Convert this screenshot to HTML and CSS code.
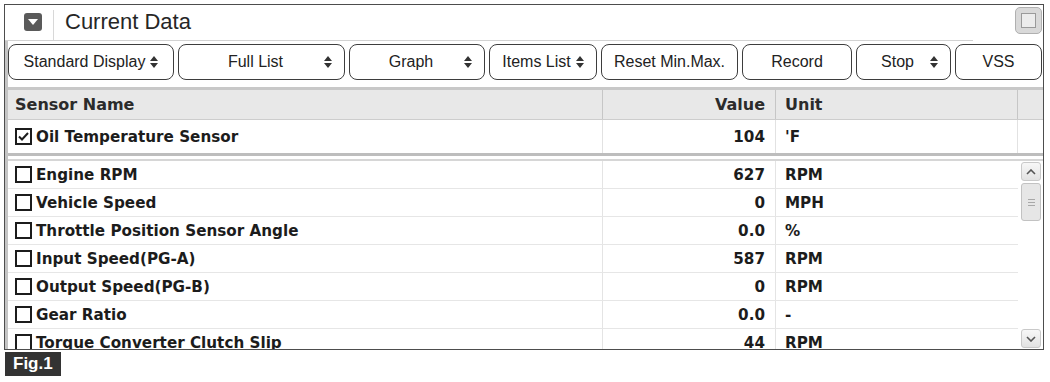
FILE: index.html
```html
<!DOCTYPE html>
<html lang="en">
<head>
    <meta charset="UTF-8">
    <title>Current Data</title>
    <link rel="stylesheet" href="styles.css">
</head>
<body>

    <div class="window">
        <div class="titlebar">
            <div class="title-main">
                <span class="collapse">
                    <svg width="10" height="6" viewBox="0 0 10 6"><path d="M0 0 H10 L5 6 Z" fill="#fff"/></svg>
                </span>
                <span class="title-sep"></span>
                <span class="title-text">Current Data</span>
            </div>
            <span class="max-btn"><span class="max-inner"></span></span>
        </div>

        <div class="content">
            <div class="toolbar">
                <div class="tb tight b1">Standard Display <svg class="updown" width="8" height="12" viewBox="0 0 8 12"><path d="M0 5 L4 0 L8 5 Z M0 7 H8 L4 12 Z" fill="#333"/></svg></div>
                <div class="tb sel b2"><span></span><span>Full List</span><svg class="updown" width="8" height="12" viewBox="0 0 8 12"><path d="M0 5 L4 0 L8 5 Z M0 7 H8 L4 12 Z" fill="#333"/></svg></div>
                <div class="tb sel b3"><span></span><span>Graph</span><svg class="updown" width="8" height="12" viewBox="0 0 8 12"><path d="M0 5 L4 0 L8 5 Z M0 7 H8 L4 12 Z" fill="#333"/></svg></div>
                <div class="tb tight b4">Items List <svg class="updown" width="8" height="12" viewBox="0 0 8 12"><path d="M0 5 L4 0 L8 5 Z M0 7 H8 L4 12 Z" fill="#333"/></svg></div>
                <div class="tb b5">Reset Min.Max.</div>
                <div class="tb b6">Record</div>
                <div class="tb sel b7"><span></span><span>Stop</span><svg class="updown" width="8" height="12" viewBox="0 0 8 12"><path d="M0 5 L4 0 L8 5 Z M0 7 H8 L4 12 Z" fill="#333"/></svg></div>
                <div class="tb b8">VSS</div>
            </div>

            <div class="grid head">
                <div class="cell name">Sensor Name</div>
                <div class="cell value">Value</div>
                <div class="cell unit">Unit</div>
                <div class="cell"></div>
            </div>

            <div class="grid fixed">
                <div class="cell name">
                    <svg class="cb" width="17" height="17" viewBox="0 0 17 17"><rect x="1" y="1" width="15" height="15" fill="#fff" stroke="#1c1c1c" stroke-width="2"/><path d="M4 8.5 L7 11.5 L13 5" fill="none" stroke="#1c1c1c" stroke-width="2"/></svg>
                    Oil Temperature Sensor
                </div>
                <div class="cell value">104</div>
                <div class="cell unit">'F</div>
                <div class="cell"></div>
            </div>

            <div class="split"></div>

            <div class="list">
                <div class="rows">
                    <div class="grid row">
                        <div class="cell name"><span class="box"></span>Engine RPM</div>
                        <div class="cell value">627</div>
                        <div class="cell unit">RPM</div>
                    </div>
                    <div class="grid row">
                        <div class="cell name"><span class="box"></span>Vehicle Speed</div>
                        <div class="cell value">0</div>
                        <div class="cell unit">MPH</div>
                    </div>
                    <div class="grid row">
                        <div class="cell name"><span class="box"></span>Throttle Position Sensor Angle</div>
                        <div class="cell value">0.0</div>
                        <div class="cell unit">%</div>
                    </div>
                    <div class="grid row">
                        <div class="cell name"><span class="box"></span>Input Speed(PG-A)</div>
                        <div class="cell value">587</div>
                        <div class="cell unit">RPM</div>
                    </div>
                    <div class="grid row">
                        <div class="cell name"><span class="box"></span>Output Speed(PG-B)</div>
                        <div class="cell value">0</div>
                        <div class="cell unit">RPM</div>
                    </div>
                    <div class="grid row">
                        <div class="cell name"><span class="box"></span>Gear Ratio</div>
                        <div class="cell value">0.0</div>
                        <div class="cell unit">-</div>
                    </div>
                    <div class="grid row">
                        <div class="cell name"><span class="box"></span>Torque Converter Clutch Slip</div>
                        <div class="cell value">44</div>
                        <div class="cell unit">RPM</div>
                    </div>
                </div>
                <div class="scroll">
                    <div class="sb-btn">
                        <svg width="10" height="6" viewBox="0 0 10 6"><path d="M1 5 L5 1 L9 5" fill="none" stroke="#555" stroke-width="1.6"/></svg>
                    </div>
                    <div class="sb-thumb"><span></span><span></span><span></span></div>
                    <div class="sb-track"></div>
                    <div class="sb-btn">
                        <svg width="10" height="6" viewBox="0 0 10 6"><path d="M1 1 L5 5 L9 1" fill="none" stroke="#555" stroke-width="1.6"/></svg>
                    </div>
                </div>
            </div>
        </div>
    </div>

    <div class="fig">Fig.1</div>

</body>
</html>
```

FILE: styles.css
```css
* {
    box-sizing: border-box;
}
body {
    margin: 0;
    background: #fff;
    font-family: "Liberation Sans", Arial, sans-serif;
    color: #1c1c1c;
}
.window {
    width: 1040px;
    height: 346px;
    margin: 4px 0 0 4px;
    border: 1px solid #4d4d4d;
    display: flex;
    flex-direction: column;
    overflow: hidden;
}
.titlebar {
    display: flex;
    height: 36px;
    flex: none;
}
.title-main {
    width: 968px;
    height: 36px;
    border-bottom: 1px solid #d2d2d2;
    display: flex;
    align-items: center;
    padding-left: 19px;
}
.collapse {
    width: 18px;
    height: 18px;
    background: #5a5a5a;
    border-radius: 3px;
    display: flex;
    align-items: center;
    justify-content: center;
    margin-top: -2px;
}
.title-sep {
    align-self: flex-end;
    width: 1px;
    height: 30px;
    background: #d8d8d8;
    margin: 0 11px;
}
.title-text {
    font-size: 22px;
    color: #262626;
    margin-top: -2px;
}
.max-btn {
    margin: 2px 1px 0 auto;
    width: 27px;
    height: 27px;
    border: 1px solid #b0b0b0;
    border-radius: 5px;
    background: #d9d9d9;
    display: flex;
    align-items: center;
    justify-content: center;
}
.max-inner {
    width: 15px;
    height: 15px;
    border: 1px solid #9a9a9a;
    background: #ececec;
}
.content {
    flex: 1;
    min-height: 0;
    display: flex;
    flex-direction: column;
    border-left: 3px solid #c4c4c4;
}
.toolbar {
    height: 49px;
    flex: none;
    padding-top: 3px;
    border-bottom: 3px solid #c8c8c8;
    display: flex;
    gap: 4px;
}
.tb {
    height: 36px;
    border: 1px solid #3d3d3d;
    border-radius: 8px;
    background: #fff;
    font-size: 16px;
    color: #222;
    display: flex;
    align-items: center;
    justify-content: center;
    white-space: nowrap;
}
.tb.tight {
    gap: 5px;
}
.tb.sel {
    display: grid;
    grid-template-columns: 1fr auto 1fr;
    padding-right: 12px;
}
.tb.sel .updown {
    justify-self: end;
}
.b1 { width: 166px; }
.b2 { width: 167px; }
.b3 { width: 136px; }
.b4 { width: 108px; }
.b5 { width: 137px; }
.b6 { width: 110px; }
.b7 { width: 95px; }
.b8 { flex: 1; margin-right: 1px; }

.grid {
    display: grid;
    grid-template-columns: 595px 173px 242px 1fr;
    font-family: "DejaVu Sans", Verdana, sans-serif;
    font-weight: bold;
    font-size: 15.2px;
    color: #1c1c1c;
}
.cell {
    display: flex;
    align-items: center;
    white-space: nowrap;
    overflow: hidden;
}
.cell.name {
    padding-left: 7px;
    gap: 4px;
}
.cell.value {
    justify-content: flex-end;
    padding-right: 10px;
}
.cell.unit {
    padding-left: 9px;
}
.head {
    height: 30px;
    flex: none;
    background: #e8e8e8;
    border-bottom: 1px solid #cdcdcd;
    font-size: 16px;
    color: #2b2b2b;
}
.head .cell {
    border-right: 1px solid #c6c6c6;
}
.head .cell:last-child {
    border-right: none;
}
.fixed {
    height: 33px;
    flex: none;
}
.fixed .cell {
    border-right: 1px solid #e2e2e2;
}
.fixed .cell:last-child {
    border-right: none;
}
.split {
    height: 8px;
    flex: none;
    border-top: 3px solid #bdbdbd;
    border-bottom: 2px solid #d6d6d6;
    background: #fff;
}
.list {
    flex: 1;
    min-height: 0;
    display: flex;
    overflow: hidden;
}
.rows {
    width: 1010px;
    flex: none;
}
.row {
    grid-template-columns: 595px 173px 242px;
    height: 28px;
    border-bottom: 1px solid #e6e6e6;
}
.row .cell.name,
.row .cell.value {
    border-right: 1px solid #e4e4e4;
}
.box {
    width: 17px;
    height: 17px;
    border: 2px solid #1c1c1c;
    background: #fff;
    flex: none;
}
.cb {
    flex: none;
}
.scroll {
    flex: 1;
    display: flex;
    flex-direction: column;
    padding: 1px 2px 1px 3px;
    gap: 2px;
}
.sb-btn {
    height: 19px;
    flex: none;
    border: 1px solid #c9c9c9;
    border-radius: 3px;
    background: linear-gradient(#f7f7f7, #e2e2e2);
    display: flex;
    align-items: center;
    justify-content: center;
}
.sb-thumb {
    height: 38px;
    flex: none;
    border: 1px solid #c2c2c2;
    border-radius: 3px;
    background: #e6e6e6;
    display: flex;
    flex-direction: column;
    align-items: center;
    justify-content: center;
    gap: 2px;
}
.sb-thumb span {
    width: 7px;
    height: 1px;
    background: #a8a8a8;
}
.sb-track {
    flex: 1;
}
.fig {
    display: inline-block;
    margin: 2px 0 0 5px;
    height: 24px;
    line-height: 24px;
    padding: 0 8px;
    background: #333;
    color: #fff;
    font-weight: bold;
    font-size: 17px;
}
```
